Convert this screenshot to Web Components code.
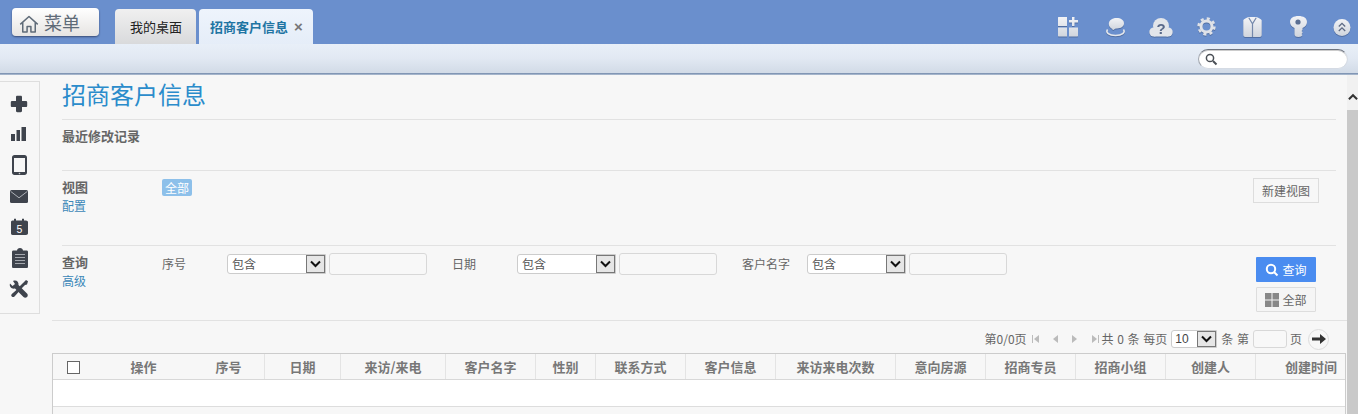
<!DOCTYPE html>
<html lang="zh"><head><meta charset="utf-8"><title>招商客户信息</title>
<style>
html,body{margin:0;padding:0;height:414px;overflow:hidden;background:#f7f7f7;font-family:"Noto Sans CJK SC","Liberation Sans",sans-serif;}
</style></head><body>
<app-shell>
  <app-topbar></app-topbar>
  <app-subbar></app-subbar>
  <app-body>
    <side-rail></side-rail>
    <main-panel>
      <page-title>招商客户信息</page-title>
      <recent-block>最近修改记录</recent-block>
      <view-row></view-row>
      <query-row></query-row>
      <grid-pager></grid-pager>
      <data-grid></data-grid>
    </main-panel>
    <app-scroll></app-scroll>
  </app-body>
</app-shell>
<script>
const FONT='"Noto Sans CJK SC","Liberation Sans",sans-serif';
function def(name,html){
  customElements.define(name,class extends HTMLElement{
    constructor(){super();this.attachShadow({mode:'open'}).innerHTML=html;}
  });
}
def('app-shell',`<style>:host{display:flex;flex-direction:column;width:1358px;height:414px;overflow:hidden}</style><slot></slot>`);
const ig='fill="url(#g)" ';
const defs=`<linearGradient id="g" x1="0" y1="0" x2="0" y2="1"><stop offset="0" stop-color="#f2f3f6"/><stop offset="1" stop-color="#d0d5dd"/></linearGradient>`;
def('app-topbar',`<style>
:host{display:flex;align-items:flex-start;height:44px;background:#6a8fcd;box-sizing:border-box;padding-left:12px;font-family:${FONT}}
.menu{display:flex;align-items:center;width:87px;height:28px;margin-top:8px;box-sizing:border-box;padding-left:7px;border-radius:4px;background:linear-gradient(#fff,#e6e4e2);box-shadow:0 1px 2px rgba(30,40,70,.65);color:#5f6b78;font-size:18px;gap:5px}
.menu svg{margin-top:3px}
.menu span{line-height:28px}
.tabs{display:flex;gap:3px;margin-left:16px;margin-top:9px;height:35px}
.tab{box-sizing:border-box;height:35px;border-radius:4px 4px 0 0;font-size:13px;display:flex;align-items:center;line-height:18px}
.a{width:81px;padding-left:15px;color:#222;background:linear-gradient(#f0f0f0,#d9dadc)}
.b{width:114px;padding-left:11px;color:#1f75a3;font-weight:700;background:linear-gradient(#eef4fc,#e5edf8)}
.x{color:#777;font-weight:700;margin-left:6px;font-size:15px;font-family:"Liberation Sans",sans-serif}
.icons{display:flex;margin-left:auto;width:300px;height:44px}
.icons svg{flex:none;display:block;filter:drop-shadow(0 1px 0 rgba(50,70,110,.45))}
</style>
<div class="menu"><svg width="20" height="20" viewBox="0 0 24 24" fill="none" stroke="#5f6b78" stroke-width="1.800" stroke-linejoin="round"><path d="M1.500 12.500 12 3l10.500 9.500M4.500 10.500V21.500h5.200v-6.500h4.600v6.500h5.200V10.500"/></svg><span>菜单</span></div>
<div class="tabs"><div class="tab a">我的桌面</div><div class="tab b">招商客户信息<span class="x">×</span></div></div>
<div class="icons">
<svg width="20" height="20" viewBox="0 0 20 20" style="margin-top:17px"><defs>${defs}</defs><path ${ig} d="M0 .5C0 .2.2 0 .5 0H9v9H0zM0 10.500h9V19.500H.5c-.3 0-.5-.2-.5-.5zM11 10.500h9V19c0 .3-.2.5-.5.5H11zM14 0h2.500v3H20v2.500h-3.500V9H14V5.500h-3V3h3z"/></svg>
<svg width="21" height="19" viewBox="0 0 21 19" style="margin-left:27px;margin-top:18px"><defs>${defs}</defs><path ${ig} d="M11.500 0C15.800 0 19 2 19 5.300S16 10.500 12 10.500c-1.500 0-2.300.4-3.300 1.200-.7.5-1.400.1-1.300-.8C5 10 3.800 8 3.800 6 3.800 2.500 7 0 11.500 0z"/><path fill="none" stroke="#e4e7ec" stroke-width="1.700" d="M2.600 11.500C.2 14.500 4 17.500 10.500 17.500S20.800 14.500 18.400 11.500"/></svg>
<svg width="24" height="19" viewBox="0 0 24 19" style="margin-left:23px;margin-top:18px"><g fill="#e2e5ea"><circle cx="4.800" cy="14" r="4.500"/><circle cx="12" cy="8" r="8"/><circle cx="19.200" cy="14" r="4.500"/><rect x="5" y="10" width="14" height="8.500"/></g><text x="12" y="15.500" text-anchor="middle" font-family="Liberation Sans" font-weight="700" font-size="15" fill="#59698a">?</text></svg>
<svg width="19" height="19" viewBox="0 0 19 19" style="margin-left:24px;margin-top:17px"><circle cx="9.500" cy="9.500" r="5.500" fill="none" stroke="#dfe2e8" stroke-width="3"/><circle cx="9.500" cy="9.500" r="7.900" fill="none" stroke="#dfe2e8" stroke-width="2.600" stroke-dasharray="3.100 3.105"/></svg>
<svg width="19" height="20" viewBox="0 0 19 20" style="margin-left:27px;margin-top:17px"><defs>${defs}</defs><path ${ig} d="M.3 3.500C.3 2.300 4 .4 6 0h7c2 .4 5.700 2.300 5.700 3.500V18c0 1.200-.8 2-2 2H2.300c-1.200 0-2-.8-2-2z"/><path fill="none" stroke="#7488ab" stroke-width="1.200" d="M5.800 .8l3.700 6 3.700-6M9.500 7v13"/></svg>
<svg width="17" height="21" viewBox="0 0 17 21" style="margin-left:28px;margin-top:16px"><defs>${defs}</defs><path ${ig} d="M8.500 0c5 0 8.500 2 8.500 6 0 3-2 5-4.500 6V14l-1 1 1 1v1l-1 1 1 1c-.5 1.300-2 2-4 2-2.300 0-4-.8-4-2.500V12C2 11 0 9 0 6 0 2 3.500 0 8.500 0z"/><circle cx="8" cy="6" r="2.600" fill="#5b6f93"/></svg>
<svg width="18" height="17" viewBox="0 0 18 17" style="margin-left:26px;margin-top:19px"><defs>${defs}</defs><circle cx="9" cy="8.500" r="8.500" ${ig}/><path fill="none" stroke="#5d6a84" stroke-width="1.300" d="M5.800 7.500 9 4.300l3.200 3.200M5.800 12 9 8.800l3.200 3.200"/></svg>
</div>`);
def('app-subbar',`<style>
:host{display:flex;flex:none;justify-content:flex-end;height:31px;box-sizing:border-box;padding:5px 10px 0 0;background:linear-gradient(#e8eff8 0,#e2e9f3 45%,#d2dbe7 92%,#7f94b3 93%,#8298b6 97%,#cdd6e2 100%)}
.s{display:flex;align-items:center;width:150px;height:20px;box-sizing:border-box;padding-left:6px;background:#fff;border-radius:10px;border:1px solid #d5dbe4;border-top-color:#6f7580;border-left-color:#a0a5ad;box-shadow:inset 0 1px 0 #ccc}
</style><div class="s"><svg width="13" height="13" viewBox="0 0 13 13" fill="none" stroke="#4a4f55" stroke-width="1.500"><circle cx="5" cy="5" r="3.600"/><path stroke-width="2" d="m8 8 3.500 3.500"/></svg></div>`);
def('app-body',`<style>:host{display:flex;flex:1;min-height:0;background:#f7f7f7}</style><slot></slot>`);
const D='#3f444d';
def('side-rail',`<style>
:host{flex:none;display:flex;flex-direction:column;align-items:center;box-sizing:border-box;width:40px;height:233px;margin-top:6px;padding:6px 2px 0 0;border:1px solid #dedede;border-left:0}
svg{display:block;flex:none;width:20px;height:31px}
</style>
<svg viewBox="0 0 20 31"><path fill="${D}" d="M7 9c0-.7.6-1.200 1.300-1.200h3.400c.7 0 1.300.5 1.300 1.200v4h4c.7 0 1.200.6 1.200 1.300v3.400c0 .7-.5 1.300-1.200 1.300h-4v4c0 .7-.6 1.200-1.300 1.200H8.300C7.600 24.200 7 23.700 7 23v-4H3c-.7 0-1.200-.6-1.200-1.300v-3.400C1.800 13.600 2.300 13 3 13h4z"/></svg>
<svg viewBox="0 0 20 31"><path fill="${D}" d="M2 15h4v7H2zM7.500 11h3.500v11H7.500zM12.500 8h4.500v14h-4.500z"/></svg>
<svg viewBox="0 0 20 31"><path fill="${D}" fill-rule="evenodd" d="M5.500 5h10C17 5 18 6 18 7.500v15c0 1.500-1 2.500-2.500 2.500h-10C4 25 3 24 3 22.500v-15C3 6 4 5 5.500 5zM5 8v14h11V8z"/><circle cx="10.500" cy="23.500" r=".8" fill="#ccc"/></svg>
<svg viewBox="0 0 20 31"><rect x="1" y="9" width="18" height="13" rx="1.500" fill="${D}"/><path fill="none" stroke="#b9bcc2" stroke-width=".9" d="M1.800 10.500 10 16.800l8.200-6.300"/></svg>
<svg viewBox="0 0 20 31"><path fill="${D}" d="M3.500 8.500H5V6.800h2v1.700h6V6.800h2v1.700h2c1 0 2 .8 2 1.800v11c0 1-1 1.700-2 1.700H3.500c-1 0-1.500-.7-1.500-1.700v-11c0-1 .5-1.800 1.500-1.800z"/><text x="10.500" y="21" text-anchor="middle" font-family="Liberation Sans" font-size="10.500" fill="#fff">5</text></svg>
<svg viewBox="0 0 20 31"><path fill="${D}" d="M4.500 7.500H8c.2-1.500 1.200-2.500 3-2.500s2.800 1 3 2.500h3.500c1 0 1.500.5 1.500 1.500v14.500c0 1-.5 1.500-1.500 1.500h-13c-1 0-1.500-.5-1.500-1.500V9c0-1 .5-1.500 1.500-1.500z"/><path stroke="#a4a8ae" d="M6 11.500h10M6 14.500h10M6 17.500h10M6 20.500h10"/></svg>
<svg viewBox="0 0 20 31"><path fill="${D}" d="M1 9.500 3.500 12 6 10 4 7c3-1.500 6 .5 5.500 4L18 19.500c1 1 1 2.500 0 3.500s-2.500 1-3.500 0L6 14.500c-3.500.8-6-2-5-5z"/><path fill="${D}" d="M14 9l3-3 2 1.200L18 10.500 16 11l-4 4-2-2zM8 15.500l2 2-4.500 5c-.8.800-2 .800-2.700.100s-.8-1.900 0-2.700z"/></svg>`);
def('main-panel',`<style>:host{flex:none;display:flex;flex-direction:column;box-sizing:border-box;width:1307px;padding-left:12px}
::slotted(*){flex:none}</style><slot></slot>`);
def('page-title',`<style>:host{display:block;box-sizing:border-box;height:45px;margin:0 11px 0 10px;border-bottom:1px solid #e2e2e2;color:#2b8ccb;font-size:24px;line-height:38px;font-weight:400}</style><slot></slot>`);
def('recent-block',`<style>:host{display:block;box-sizing:border-box;height:51px;margin:0 11px 0 10px;padding-top:6px;border-bottom:1px solid #e2e2e2;color:#666;font-size:13px;font-weight:700;line-height:19px}</style><slot></slot>`);
const labelCss=`.l{width:100px;flex:none}.t{color:#666;font-size:13px;font-weight:700;line-height:19px;display:block}.k{color:#3b87b8;font-size:12px;line-height:18px;margin-top:1px;display:block}`;
def('view-row',`<style>:host{display:flex;box-sizing:border-box;height:75px;margin:0 11px 0 10px;padding-top:6px;border-bottom:1px solid #e2e2e2;font-size:13px}
${labelCss}
.b{align-self:flex-start;margin-top:2px;width:30px;height:17px;background:#8dc0ea;color:#fff;border-radius:2px;text-align:center;font-size:12px;line-height:17px}
.n{margin-left:auto;margin-right:17px;align-self:flex-start;width:66px;height:25px;margin-top:1px;box-sizing:border-box;border:1px solid #ddd;background:#f7f7f7;color:#666;font-size:12px;text-align:center;line-height:23px}
</style><div class="l"><span class="t">视图</span><span class="k">配置</span></div><div class="b">全部</div><div class="n">新建视图</div>`);
const chev=`<svg width="11" height="8" viewBox="0 0 11 8" fill="none" stroke="#111" stroke-width="2"><path d="M1 1.500 5.500 6 10 1.500"/></svg>`;
const field=(lab)=>`<div class="f"><span class="lab">${lab}</span><div class="sel"><span>包含</span><i>${chev}</i></div><div class="inp"></div></div>`;
def('query-row',`<style>:host{display:flex;box-sizing:border-box;height:75px;padding:6px 31px 0 10px;border-bottom:1px solid #e2e2e2;font-size:12px}
${labelCss}
.f{display:flex;width:290px;flex:none;align-items:flex-start;height:22px;margin-top:2px}
.lab{width:65px;flex:none;color:#666;font-size:12px;line-height:20px}
.sel{width:99px;height:20px;box-sizing:border-box;flex:none;background:#fff;border:1px solid #ccc;border-radius:3px 0 0 3px;display:flex;justify-content:space-between;color:#555;font-size:12px;line-height:18px;padding-left:4px}
.sel i{display:flex;align-items:center;justify-content:center;width:19px;height:18px;background:#e6e6e6;border:1px solid #777;box-sizing:border-box}
.inp{width:98px;height:22px;margin-top:-1px;margin-left:3px;box-sizing:border-box;flex:none;border:1px solid #d8d8d8;border-radius:3px;background:#f8f8f8}
.acts{margin-left:auto;margin-top:5px;display:flex;flex-direction:column;gap:5px}
.btn{width:60px;height:25px;box-sizing:border-box;display:flex;align-items:center;justify-content:center;gap:3px;font-size:12px;border-radius:1px}
.q{background:#4a8cf0;color:#fff}
.all{background:#f5f5f5;border:1px solid #ddd;color:#666}
</style><div class="l"><span class="t">查询</span><span class="k">高级</span></div>${field('序号')}${field('日期')}${field('客户名字')}
<div class="acts"><div class="btn q"><svg width="14" height="14" viewBox="0 0 14 14" fill="none" stroke="#fff" stroke-width="2"><circle cx="6" cy="6" r="4.200"/><path d="m9 9 3.500 3.500"/></svg>查询</div><div class="btn all"><svg width="14" height="14" viewBox="0 0 14 14" fill="#888"><path d="M0 0h6.500v6.500H0zM7.500 0H14v6.500H7.500zM0 7.500h6.500V14H0zM7.500 7.500H14V14H7.500z"/></svg>全部</div></div>`);
def('grid-pager',`<style>:host{display:flex;justify-content:flex-end;align-items:center;box-sizing:border-box;height:32px;padding:4px 18px 0 0;color:#666;font-size:12px;line-height:18px}
svg{flex:none}
.sel{width:46px;height:18px;margin-left:4px;box-sizing:border-box;background:#fff;border:1px solid #ccc;border-radius:3px 0 0 3px;display:flex;justify-content:space-between;padding-left:3px;line-height:16px;font-family:"Liberation Sans",sans-serif;font-size:12px;color:#444}
.sel i{display:flex;align-items:center;justify-content:center;width:19px;height:16px;background:#e6e6e6;border:1px solid #777;box-sizing:border-box}
.inp{width:34px;height:18px;margin-left:4px;box-sizing:border-box;border:1px solid #d8d8d8;border-radius:3px;background:#f8f8f8}
.go{width:21px;height:21px;box-sizing:border-box;border:1px solid #ddd;border-radius:50%;display:flex;align-items:center;justify-content:center;margin-left:6px}
.ws{word-spacing:1px}
</style><span>第0/0页</span>
<svg width="10" height="10" viewBox="0 0 10 10" fill="#bbb" style="margin-left:4px"><path d="M1 1h1v8H1zM8 1v8L3 5z"/></svg>
<svg width="10" height="10" viewBox="0 0 10 10" fill="#bbb" style="margin-left:9px"><path d="M8 1v8L3 5z"/></svg>
<svg width="10" height="10" viewBox="0 0 10 10" fill="#bbb" style="margin-left:10px"><path d="M2 1v8l5-4z"/></svg>
<svg width="10" height="10" viewBox="0 0 10 10" fill="#bbb" style="margin-left:10px"><path d="M2 1v8l5-4zM8 1h1v8H8z"/></svg>
<span class="ws" style="margin-left:2px">共 0 条 每页</span><div class="sel"><span>10</span><i>${chev}</i></div><span style="margin-left:4px" class="ws">条 第</span><div class="inp"></div><span style="margin-left:3px">页</span><div class="go"><svg width="14" height="10" viewBox="0 0 14 10" fill="#333"><path d="M0 3.500h8V0l6 5-6 5V6.500H0z"/></svg></div>`);
const heads=[['操作',99,0],['序号',72,1],['日期',76,1],['来访/来电',105,1],['客户名字',90,1],['性别',60,1],['联系方式',90,1],['客户信息',90,1],['来访来电次数',120,1],['意向房源',90,1],['招商专员',90,1],['招商小组',90,1],['创建人',90,1],['创建时间',90,0]];
def('data-grid',`<style>:host{display:block;box-sizing:border-box;width:1294px;border:1px solid #ccc;border-bottom:0;font-size:13px}
.h{display:flex;height:25px;border-bottom:1px solid #d8d8d8;background:#f7f7f7}
.c{flex:none;box-sizing:border-box;text-align:center;color:#777;font-weight:700;line-height:25px;white-space:nowrap}
.c.s{border-right:1px solid #e4e4e4}
.cb{flex:none;width:41px;display:flex;align-items:center;justify-content:center}
.cb b{display:block;width:13px;height:13px;box-sizing:border-box;border:1px solid #666;background:#fff;margin:1px 0 0 -1px}
.r{height:26px;background:#fff;border-bottom:1px solid #ddd}
.e{height:7px}
</style><div class="h"><div class="cb"><b></b></div>${heads.map(([t,w,s],i)=>`<div class="c${s?' s':''}" style="width:${w}px${i==13?';text-align:right;padding-right:8px;flex:1':''}">${t}</div>`).join('')}</div><div class="r"></div><div class="e"></div>`);
def('app-scroll',`<style>:host{flex:none;display:flex;flex-direction:column;width:11px;background:#f1f1f1}
.top{height:35px;display:flex;align-items:center;justify-content:center;padding:9px 0 0 1px;box-sizing:border-box}
.th{flex:1;background:#c9c9c9}
</style><div class="top"><svg width="11" height="8" viewBox="0 0 11 8" fill="none" stroke="#333" stroke-width="2.200"><path d="M1 6.500 5.500 2 10 6.500"/></svg></div><div class="th"></div>`);
</script>
</body></html>
